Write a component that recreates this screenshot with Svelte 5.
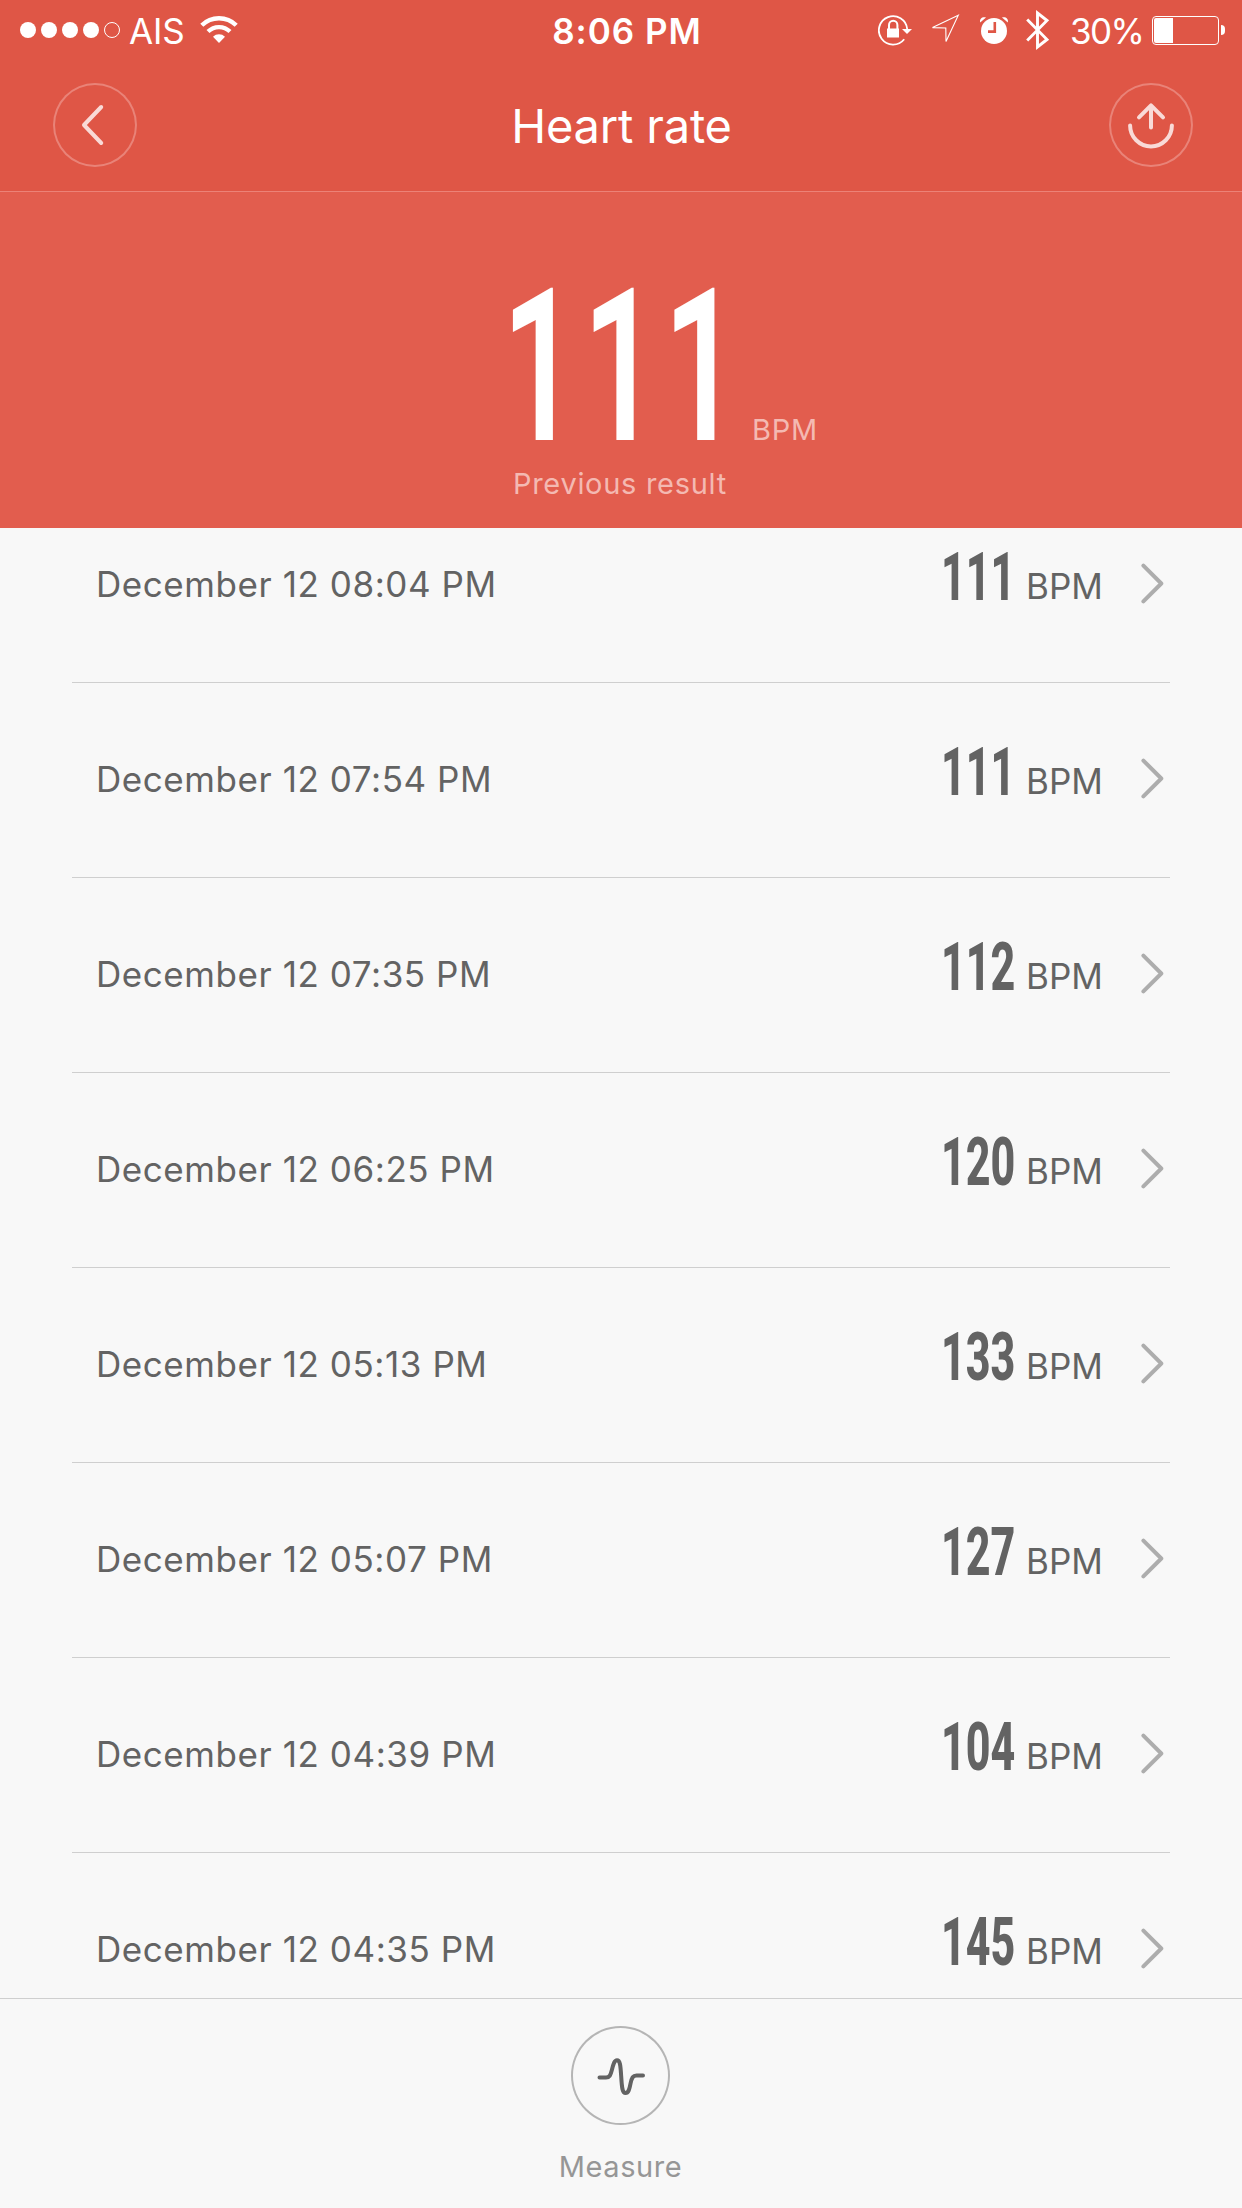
<script>
  const carrier = 'AIS';
  const battery = 30;
  const signal = 4;

  const latest = 111;

  const records = [
    { date: 'December 12 08:04 PM', bpm: 111 },
    { date: 'December 12 07:54 PM', bpm: 111 },
    { date: 'December 12 07:35 PM', bpm: 112 },
    { date: 'December 12 06:25 PM', bpm: 120 },
    { date: 'December 12 05:13 PM', bpm: 133 },
    { date: 'December 12 05:07 PM', bpm: 127 },
    { date: 'December 12 04:39 PM', bpm: 104 },
    { date: 'December 12 04:35 PM', bpm: 145 }
  ];
</script>

<div class="screen">
  <header class="top">
    <!-- Status bar -->
    <div class="status">
      <div class="status-left">
        <div class="signal">
          {#each Array(5) as _, i}
            <span class="dot" class:empty={i >= signal}></span>
          {/each}
        </div>
        <span class="carrier">{carrier}</span>
        <svg class="wifi" width="38" height="28" viewBox="0 0 38 28" fill="none" stroke="#fff">
          <path d="M1.8 9.3a24.5 24.5 0 0 1 34.4 0" stroke-width="4.4" />
          <path d="M8 15.6a15.6 15.6 0 0 1 22 0" stroke-width="4.2" />
          <path d="M19 27l-6-6.2a8.6 8.6 0 0 1 12 0z" fill="#fff" stroke="none" />
        </svg>
      </div>

      <span class="clock">8:06 PM</span>

      <div class="status-right">
        <svg class="lock" width="36" height="32" viewBox="0 0 36 32" fill="none" stroke="#fff">
          <path d="M26.2 25.2A14.2 14.2 0 1 1 29.2 15" stroke-width="1.8" />
          <path d="M24 15h10l-5 5z" fill="#fff" stroke="none" />
          <path d="M11 15v-4a4.2 4.2 0 0 1 8.400 0v4" stroke-width="2" />
          <rect x="9" y="14.500" width="12" height="9" fill="#fff" stroke="none" />
        </svg>
        <svg class="location" width="30" height="32" viewBox="0 0 30 32" fill="none" stroke="#fff" stroke-width="1.100">
          <path d="M28.300 1.200L2.500 13.600l13.300.4.200 13.500z" />
        </svg>
        <svg class="alarm" width="30" height="30" viewBox="0 0 30 30" fill="#fff">
          <circle cx="15" cy="16" r="13" />
          <path d="M1.200 7.500C.2 3.500 3.500 1.500 7 2.500zM28.800 7.500c1-4-2.300-6-5.800-5z" />
          <path d="M15.800 7v9.600H9" fill="none" stroke="#df5646" stroke-width="2.600" />
        </svg>
        <svg class="bluetooth" width="26" height="42" viewBox="0 0 26 42" fill="none" stroke="#fff" stroke-width="2.900">
          <path d="M2.200 10.500L22 30.500 12.500 38V4L22 11.500 2.200 31.500" />
        </svg>
        <span class="percent">{battery}%</span>
        <div class="battery">
          <div class="cell"><div class="charge" style="width: {battery}%"></div></div>
          <div class="nub"></div>
        </div>
      </div>
    </div>

    <!-- Navigation -->
    <nav class="nav">
      <button class="round" aria-label="Back">
        <svg width="84" height="84" viewBox="0 0 84 84">
          <path d="M48.200 24L31 42l17.200 18" />
        </svg>
      </button>
      <h1>Heart rate</h1>
      <button class="round" aria-label="Share">
        <svg width="84" height="84" viewBox="0 0 84 84">
          <path d="M21.100 42.500a20.900 20.900 0 0 0 41.800 0M42 44.500V22.500M30 34.300l12-12 12 12" />
        </svg>
      </button>
    </nav>
  </header>

  <!-- Last measurement -->
  <section class="hero">
    <div class="hero-value">
      <span class="hero-number"><span>{latest}</span></span>
      <span class="hero-unit">BPM</span>
    </div>
    <p>Previous result</p>
  </section>

  <!-- History -->
  <main class="list">
    {#each records as record}
      <div class="row">
        <span class="date">{record.date}</span>
        <span class="value">
          <span class="number"><span>{record.bpm}</span></span>
          <span class="unit">BPM</span>
        </span>
        <svg class="chevron" width="24" height="42" viewBox="0 0 24 42">
          <path d="M3.400 2.600L21.300 20.500 3.400 38.400" />
        </svg>
      </div>
    {/each}
  </main>

  <footer class="footer">
    <button class="measure" aria-label="Measure">
      <svg width="99" height="99" viewBox="0 0 99 99">
        <path d="M28.500 51.500h6.500c3.500 0 4.500-2 6-8 1.500-6 2.500-9.300 5-9.300 3 0 3.500 4.300 4.200 16.200.7 12.300 1.300 16.600 4.300 16.600 3 0 4-4 5-9.300 1.300-6.200 2.500-8.200 6-8.200h6.500" />
      </svg>
    </button>
    <span>Measure</span>
  </footer>
</div>

<style>
  :global(body) {
    margin: 0;
    background: #f8f8f8;
  }

  .screen {
    width: 1242px;
    height: 2208px;
    display: flex;
    flex-direction: column;
    overflow: hidden;
    background: #f8f8f8;
    color: #636363;
    font-family: Inter, 'Liberation Sans', sans-serif;
  }

  /* Header */
  .top {
    flex: none;
    height: 191px;
    background: #df5646;
    border-bottom: 1px solid #ec8277;
    color: #fff;
  }

  .status {
    display: grid;
    grid-template-columns: 1fr auto 1fr;
    align-items: center;
    height: 60px;
    padding: 0 17px 0 20px;
    font-size: 35px;
    line-height: 58px;
    white-space: nowrap;
  }

  .status-left,
  .status-right,
  .signal,
  .battery {
    display: flex;
    align-items: center;
  }

  .status-right {
    justify-content: flex-end;
  }

  .signal {
    gap: 5px;
  }

  .dot {
    box-sizing: border-box;
    width: 16px;
    height: 16px;
    border-radius: 50%;
    background: #fff;
  }

  .dot.empty {
    background: none;
    border: 1px solid #fff;
  }

  .carrier,
  .clock,
  .percent {
    padding-top: 1px;
  }

  .carrier {
    width: 71px;
    margin-left: 9px;
    letter-spacing: -0.2px;
  }

  .clock {
    padding-left: 9px;
    font-weight: 600;
    letter-spacing: 1px;
  }

  .lock {
    margin-right: 16px;
  }

  .location {
    margin-right: 19px;
  }

  .alarm {
    margin-right: 16px;
  }

  .bluetooth {
    margin-right: 19px;
  }

  .percent {
    width: 82px;
    letter-spacing: -1.6px;
  }

  .cell {
    box-sizing: border-box;
    width: 67px;
    height: 29px;
    padding: 1px;
    border: 1px solid #fff;
    border-radius: 4px;
  }

  .charge {
    height: 100%;
    border-radius: 2px 0 0 2px;
    background: #fff;
  }

  .nub {
    width: 4px;
    height: 10px;
    margin-left: 2px;
    border-radius: 0 4px 4px 0;
    background: #fff;
  }

  .nav {
    display: flex;
    align-items: center;
    justify-content: space-between;
    height: 130px;
    padding: 0 49px 0 53px;
  }

  .nav h1 {
    margin: 2px 3px 0 0;
    font-size: 47px;
    font-weight: 400;
    line-height: 60px;
    letter-spacing: -0.2px;
  }

  button {
    display: block;
    padding: 0;
    border: none;
    border-radius: 50%;
    background: none;
  }

  svg {
    display: block;
    flex: none;
  }

  .round {
    width: 84px;
    height: 84px;
    box-shadow: inset 0 0 0 2px #e98378;
  }

  .round path {
    fill: none;
    stroke: #f9dad7;
    stroke-width: 4;
    stroke-linecap: round;
    stroke-linejoin: round;
  }

  /* Hero */
  .hero {
    flex: none;
    height: 336px;
    background: #e25d4e;
    color: #f4b9b2;
    font-size: 29px;
  }

  .hero-value {
    box-sizing: border-box;
    display: flex;
    align-items: baseline;
    height: 265px;
    padding: 80px 0 0 502px;
    line-height: 190px;
  }

  /* Digits are squeezed to a narrow, DIN-like width */
  .hero-number {
    width: 250px;
    color: #fff;
    font-family: Roboto, sans-serif;
    font-size: 214px;
    font-weight: 600;
  }

  .hero-number span,
  .number span {
    display: inline-block;
    transform-origin: left;
  }

  .hero-number span {
    letter-spacing: 8px;
    transform: scaleX(0.62);
  }

  .hero-unit {
    letter-spacing: 0.8px;
  }

  .hero p {
    margin: 0;
    padding-left: 513px;
    line-height: 54px;
    letter-spacing: 0.7px;
  }

  /* List */
  .list {
    flex: none;
    height: 1470px;
    overflow: hidden;
  }

  .row {
    box-sizing: border-box;
    display: flex;
    align-items: center;
    height: 195px;
    margin: 0 72px;
    padding: 0 6px 3px 24px;
    border-bottom: 1px solid #cfcfcf;
    font-size: 35px;
  }

  /* The list is scrolled a little under the hero */
  .row:first-child {
    margin-top: -40px;
  }

  .date {
    flex: 1;
    letter-spacing: 0.57px;
  }

  .value {
    display: flex;
    align-items: baseline;
    padding-bottom: 4px;
    line-height: 80px;
  }

  .number {
    width: 85px;
    font-family: Roboto, sans-serif;
    font-size: 66px;
    font-weight: 800;
  }

  .number span {
    transform: translateY(1px) scaleX(0.65);
  }

  .unit {
    width: 114px;
  }

  .chevron path {
    fill: none;
    stroke: #adadad;
    stroke-width: 4;
    stroke-linecap: round;
    stroke-linejoin: round;
  }

  /* Footer */
  .footer {
    flex: 1;
    display: flex;
    flex-direction: column;
    align-items: center;
    padding-right: 1px;
    border-top: 1px solid #cfcfcf;
    color: #969696;
    font-size: 29px;
    letter-spacing: 0.6px;
  }

  .measure {
    width: 99px;
    height: 99px;
    margin: 27px 0 24px;
    box-shadow: inset 0 0 0 2px #b5b5b5;
  }

  .measure path {
    fill: none;
    stroke: #636363;
    stroke-width: 4;
    stroke-linecap: round;
    stroke-linejoin: round;
  }
</style>
